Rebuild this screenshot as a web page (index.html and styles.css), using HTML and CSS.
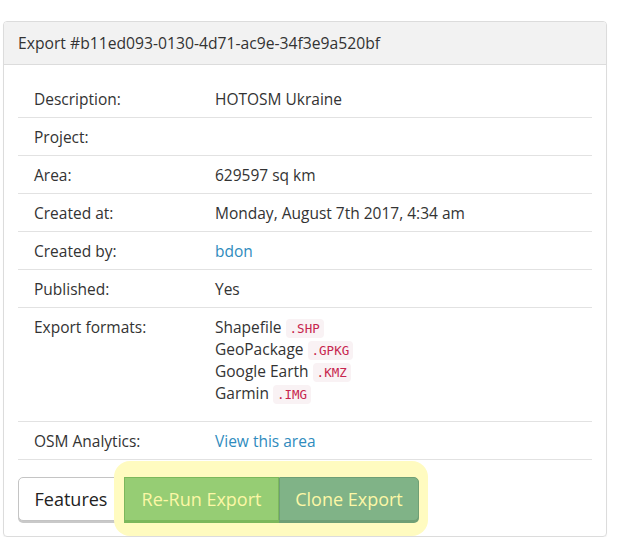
FILE: index.html
```html
<!DOCTYPE html>
<html>
<head>
<meta charset="utf-8">
<link rel="stylesheet" href="styles.css">
</head>
<body>
<div class="panel">
  <div class="panel-heading">Export #b11ed093-0130-4d71-ac9e-34f3e9a520bf</div>
  <div class="panel-body">
    <div class="details">
      <div class="row first">
        <div class="label">Description:</div>
        <div class="value">HOTOSM Ukraine</div>
      </div>
      <div class="row">
        <div class="label">Project:</div>
        <div class="value"></div>
      </div>
      <div class="row">
        <div class="label">Area:</div>
        <div class="value">629597 sq km</div>
      </div>
      <div class="row">
        <div class="label">Created at:</div>
        <div class="value">Monday, August 7th 2017, 4:34 am</div>
      </div>
      <div class="row">
        <div class="label">Created by:</div>
        <div class="value"><a class="link" href="#">bdon</a></div>
      </div>
      <div class="row">
        <div class="label">Published:</div>
        <div class="value">Yes</div>
      </div>
      <div class="row formats">
        <div class="label">Export formats:</div>
        <div class="value">
          <div class="fmt">Shapefile <code>.SHP</code></div>
          <div class="fmt">GeoPackage <code>.GPKG</code></div>
          <div class="fmt">Google Earth <code>.KMZ</code></div>
          <div class="fmt">Garmin <code>.IMG</code></div>
        </div>
      </div>
      <div class="row last">
        <div class="label">OSM Analytics:</div>
        <div class="value"><a class="link" href="#">View this area</a></div>
      </div>
    </div>
    <div class="btn-group">
      <button class="btn btn-default">Features</button>
      <div class="highlight">
        <button class="btn btn-rerun">Re-Run Export</button>
        <button class="btn btn-clone">Clone Export</button>
      </div>
    </div>
  </div>
</div>
</body>
</html>
```

FILE: styles.css
```css
html, body {
  margin: 0;
  padding: 0;
  background: #fff;
}
body {
  font-family: "Open Sans", "Liberation Sans", sans-serif;
  font-size: 15.5px;
  color: #333;
  padding: 21px 0 0 3px;
}
.panel {
  width: 602px;
  border: 1px solid #dcdcdc;
  border-radius: 4px;
  box-shadow: 0 1px 1px rgba(0,0,0,0.05);
}
.panel-heading {
  height: 42px;
  line-height: 42px;
  padding: 0 14px;
  font-size: 15.7px;
  background: #f2f2f2;
  border-bottom: 1px solid #dcdcdc;
  border-radius: 3px 3px 0 0;
}
.panel-body {
  padding: 15px 14px 15px 14px;
}
.row {
  display: flex;
  border-top: 1px solid #e2e2e2;
  padding: 8px 0 7px 16px;
  line-height: 22px;
}
.row.first {
  border-top: none;
}
.row.last {
  border-bottom: 1px solid #e2e2e2;
}
.row.formats {
  padding-bottom: 17px;
}
.label {
  width: 181px;
  flex: none;
}
.value {
  flex: 1;
  min-height: 22px;
}
.fmt {
  height: 22px;
  line-height: 22px;
}
.link {
  color: #2f8bbd;
  text-decoration: none;
}
code {
  font-family: "DejaVu Sans Mono", "Liberation Mono", monospace;
  font-size: 12.5px;
  line-height: 13px;
  display: inline-block;
  color: #c7254e;
  background: #f9f2f4;
  padding: 3px 4px 3px;
  border-radius: 4px;
  vertical-align: 0;
}
.btn-group {
  display: flex;
  margin-top: 17px;
}
.btn {
  font-family: "Open Sans", "Liberation Sans", sans-serif;
  font-size: 18px;
  height: 44px;
  padding: 0 10px;
  border: 1px solid;
  margin: 0;
  cursor: pointer;
}
.btn-default {
  background: #fff;
  color: #222;
  border-color: #c4c4c4;
  border-radius: 5px 0 0 5px;
  box-shadow: 0 2px 0 #c9c9c9;
  width: 106px;
}
.highlight {
  display: flex;
  background: #fffbc0;
  border-radius: 16px;
  padding: 16px 9px 15px 10px;
  margin: -16px 0 -15px -10px;
}
.btn-rerun {
  background: #96cd74;
  border-color: #7cb85c;
  color: #fcf7a6;
  width: 155px;
  border-radius: 0;
  box-shadow: 0 2px 0 #7cb85c;
}
.btn-clone {
  background: #80b387;
  border-color: #6f9f75;
  color: #fcf7a6;
  width: 140px;
  border-radius: 0 5px 5px 0;
  box-shadow: 0 2px 0 #6f9f75;
}
```
